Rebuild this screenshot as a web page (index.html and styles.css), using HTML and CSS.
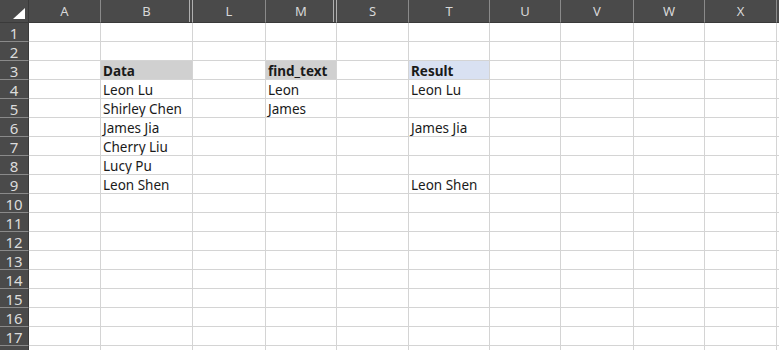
FILE: index.html
```html
<!DOCTYPE html>
<html lang="en">
<head>
    <meta charset="UTF-8">
    <title>find_text</title>
    <link rel="stylesheet" href="styles.css">
</head>
<body>
    <div class="sheet">
        <div class="corner"><svg width="12" height="11" viewBox="0 0 12 11"><polygon points="12,0 12,11 0,11" fill="#fff"/></svg></div>
        <div class="ch">A</div><div class="ch hid">B</div><div class="ch">L</div><div class="ch hid">M</div><div class="ch">S</div><div class="ch">T</div><div class="ch">U</div><div class="ch">V</div><div class="ch">W</div><div class="ch">X</div><div class="ch"></div>

        <div class="rh">1</div><div class="c"></div><div class="c"></div><div class="c"></div><div class="c"></div><div class="c"></div><div class="c"></div><div class="c"></div><div class="c"></div><div class="c"></div><div class="c"></div><div class="c"></div>
        <div class="rh">2</div><div class="c"></div><div class="c"></div><div class="c"></div><div class="c"></div><div class="c"></div><div class="c"></div><div class="c"></div><div class="c"></div><div class="c"></div><div class="c"></div><div class="c"></div>
        <div class="rh">3</div><div class="c"></div><div class="c head grey">Data</div><div class="c"></div><div class="c head grey">find_text</div><div class="c"></div><div class="c head blue">Result</div><div class="c"></div><div class="c"></div><div class="c"></div><div class="c"></div><div class="c"></div>
        <div class="rh">4</div><div class="c"></div><div class="c">Leon Lu</div><div class="c"></div><div class="c">Leon</div><div class="c"></div><div class="c">Leon Lu</div><div class="c"></div><div class="c"></div><div class="c"></div><div class="c"></div><div class="c"></div>
        <div class="rh">5</div><div class="c"></div><div class="c">Shirley Chen</div><div class="c"></div><div class="c">James</div><div class="c"></div><div class="c"></div><div class="c"></div><div class="c"></div><div class="c"></div><div class="c"></div><div class="c"></div>
        <div class="rh">6</div><div class="c"></div><div class="c">James Jia</div><div class="c"></div><div class="c"></div><div class="c"></div><div class="c">James Jia</div><div class="c"></div><div class="c"></div><div class="c"></div><div class="c"></div><div class="c"></div>
        <div class="rh">7</div><div class="c"></div><div class="c">Cherry Liu</div><div class="c"></div><div class="c"></div><div class="c"></div><div class="c"></div><div class="c"></div><div class="c"></div><div class="c"></div><div class="c"></div><div class="c"></div>
        <div class="rh">8</div><div class="c"></div><div class="c">Lucy Pu</div><div class="c"></div><div class="c"></div><div class="c"></div><div class="c"></div><div class="c"></div><div class="c"></div><div class="c"></div><div class="c"></div><div class="c"></div>
        <div class="rh">9</div><div class="c"></div><div class="c">Leon Shen</div><div class="c"></div><div class="c"></div><div class="c"></div><div class="c">Leon Shen</div><div class="c"></div><div class="c"></div><div class="c"></div><div class="c"></div><div class="c"></div>
        <div class="rh">10</div><div class="c"></div><div class="c"></div><div class="c"></div><div class="c"></div><div class="c"></div><div class="c"></div><div class="c"></div><div class="c"></div><div class="c"></div><div class="c"></div><div class="c"></div>
        <div class="rh">11</div><div class="c"></div><div class="c"></div><div class="c"></div><div class="c"></div><div class="c"></div><div class="c"></div><div class="c"></div><div class="c"></div><div class="c"></div><div class="c"></div><div class="c"></div>
        <div class="rh">12</div><div class="c"></div><div class="c"></div><div class="c"></div><div class="c"></div><div class="c"></div><div class="c"></div><div class="c"></div><div class="c"></div><div class="c"></div><div class="c"></div><div class="c"></div>
        <div class="rh">13</div><div class="c"></div><div class="c"></div><div class="c"></div><div class="c"></div><div class="c"></div><div class="c"></div><div class="c"></div><div class="c"></div><div class="c"></div><div class="c"></div><div class="c"></div>
        <div class="rh">14</div><div class="c"></div><div class="c"></div><div class="c"></div><div class="c"></div><div class="c"></div><div class="c"></div><div class="c"></div><div class="c"></div><div class="c"></div><div class="c"></div><div class="c"></div>
        <div class="rh">15</div><div class="c"></div><div class="c"></div><div class="c"></div><div class="c"></div><div class="c"></div><div class="c"></div><div class="c"></div><div class="c"></div><div class="c"></div><div class="c"></div><div class="c"></div>
        <div class="rh">16</div><div class="c"></div><div class="c"></div><div class="c"></div><div class="c"></div><div class="c"></div><div class="c"></div><div class="c"></div><div class="c"></div><div class="c"></div><div class="c"></div><div class="c"></div>
        <div class="rh">17</div><div class="c"></div><div class="c"></div><div class="c"></div><div class="c"></div><div class="c"></div><div class="c"></div><div class="c"></div><div class="c"></div><div class="c"></div><div class="c"></div><div class="c"></div>
        <div class="rh"></div><div class="c"></div><div class="c"></div><div class="c"></div><div class="c"></div><div class="c"></div><div class="c"></div><div class="c"></div><div class="c"></div><div class="c"></div><div class="c"></div><div class="c"></div>
    </div>
</body>
</html>
```

FILE: styles.css
```css
html, body {
    margin: 0;
    padding: 0;
    overflow: hidden;
    background-color: #fff;
}
.sheet {
    display: grid;
    grid-template-columns: 29px 72px 92px 73px 71px 72px 81px 71px 73px 71px 72px 1fr;
    grid-template-rows: 23px;
    grid-auto-rows: 19px;
    width: 779px;
    height: 350px;
    overflow: hidden;
    font-family: 'Noto Sans', 'Open Sans', sans-serif;
}
.sheet > div {
    box-sizing: border-box;
    overflow: hidden;
    white-space: nowrap;
}
.corner {
    background-color: #4a4a4a;
    border-right: 1px solid #3a3a3a;
    border-bottom: 1px solid #3a3a3a;
    display: flex;
    align-items: flex-end;
    justify-content: flex-end;
    padding: 0 3px 3px 0;
}
.corner svg {
    display: block;
}
.ch {
    background-color: #4a4a4a;
    color: #d8d8d8;
    font-size: 13px;
    line-height: 22px;
    text-align: center;
    border-right: 1px solid #8a8a8a;
    border-bottom: 1px solid #3a3a3a;
}
.ch.hid {
    border-right-color: #b0b0b0;
    box-shadow: inset -2px 0 0 #4a4a4a, inset -3px 0 0 #b0b0b0;
}
.rh {
    background-color: #4a4a4a;
    color: #dcdcdc;
    font-size: 15px;
    line-height: 19px;
    padding-top: 1px;
    text-align: center;
    border-right: 1px solid #3a3a3a;
    border-bottom: 1px solid #8a8a8a;
}
.c {
    border-right: 1px solid #d4d4d4;
    border-bottom: 1px solid #d4d4d4;
    color: #1a1a1a;
    font-size: 13.5px;
    line-height: 18px;
    padding: 1px 0 0 2px;
}
.head {
    font-weight: bold;
}
.grey {
    background-color: #d0d0d0;
}
.blue {
    background-color: #d9e1f2;
}
```
